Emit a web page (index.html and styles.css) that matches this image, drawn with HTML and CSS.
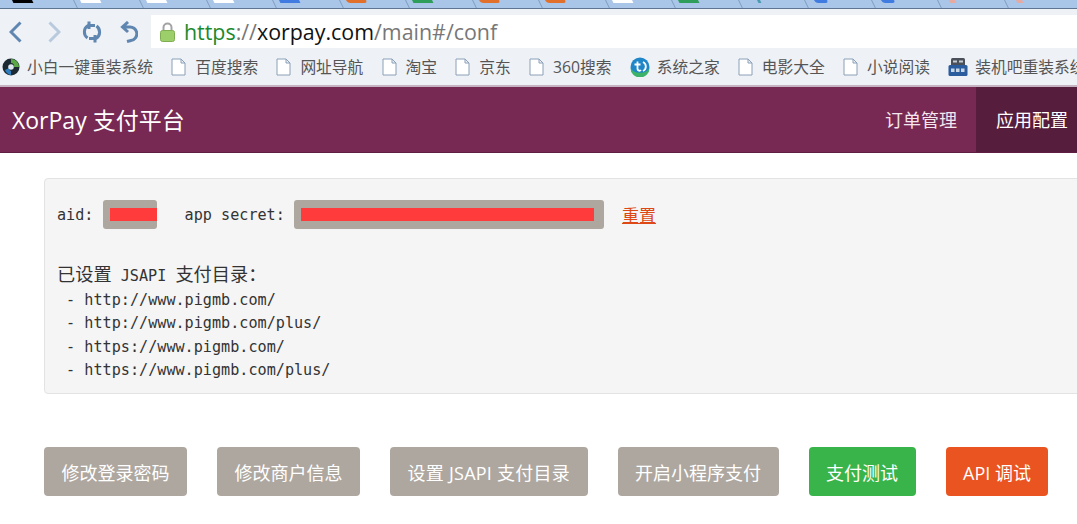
FILE: index.html
```html
<!DOCTYPE html>
<html lang="zh-CN">
  <head>
    <meta charset="UTF-8" />
    <title>XorPay 支付平台</title>
    <link rel="stylesheet" href="styles.css">
  </head>
  <body>
    <!-- browser chrome -->
    <div class="tabstrip">
      <div class="tab"><span class="fav fav-black"></span></div>
      <div class="tab"><span class="fav fav-white"></span></div>
      <div class="tab"><span class="fav fav-white"></span></div>
      <div class="tab"><span class="fav fav-white"></span></div>
      <div class="tab"><span class="fav fav-blue"></span></div>
      <div class="tab"><span class="fav fav-orange"></span></div>
      <div class="tab"><span class="fav fav-green"></span></div>
      <div class="tab"><span class="fav fav-orange"></span></div>
      <div class="tab"><span class="fav fav-orange"></span></div>
      <div class="tab"><span class="fav fav-white"></span></div>
      <div class="tab"><span class="fav fav-green"></span></div>
      <div class="tab"><span class="fav fav-tiny"></span></div>
      <div class="tab"><span class="fav fav-small"></span></div>
      <div class="tab"><span class="fav fav-small"></span></div>
      <div class="tab"><span class="fav fav-pink"></span></div>
      <div class="tab"><span class="fav fav-pink"></span></div>
    </div>
    <div class="toolbar">
      <svg class="back" width="13" height="22" viewBox="0 0 13 22"><path d="M11.500 1.500 L2 11 L11.500 20.500" fill="none" stroke="#5f86b0" stroke-width="3"/></svg>
      <svg class="next" width="13" height="22" viewBox="0 0 13 22"><path d="M1.500 1.500 L11 11 L1.500 20.500" fill="none" stroke="#b9cade" stroke-width="3"/></svg>
      <svg class="reload" width="20" height="22" viewBox="0 0 20 22"><path d="M5.500 17 A7.500 7.500 0 0 1 6 4.500 H13 M7 0.500 L7 8 M14.500 5 A7.500 7.500 0 0 1 14 17.500 H7 M13 21.500 L13 14" fill="none" stroke="#5f86b0" stroke-width="3"/></svg>
      <svg class="undo" width="18" height="22" viewBox="0 0 18 22"><path d="M3 6 H9 A6.500 6.500 0 0 1 11 19.500 L7 20.500 M8 1 L2.500 6 L8 11" fill="none" stroke="#5f86b0" stroke-width="3"/></svg>
      <div class="address">
        <svg width="15" height="20" viewBox="0 0 15 20"><path d="M3.500 9 V5.500 A4 4 0 0 1 11.500 5.500 V9" fill="none" stroke="#a3a3a3" stroke-width="2"/><rect x="0.500" y="8.500" width="14" height="11" rx="2" fill="#9ccf6a" stroke="#7fae52"/></svg>
        <span class="url"><span class="url-https">https</span><span class="url-grey">://</span><span class="url-host">xorpay.com</span><span class="url-grey">/main#/conf</span></span>
      </div>
    </div>
    <div class="bookmarks">
      <span class="bookmark with-logo">
        <svg width="18" height="18" viewBox="0 0 18 18"><circle cx="9" cy="9" r="8.500" fill="#1c2b33"/><path d="M9 1 A8 8 0 0 1 17 9 L12 9 A3 3 0 0 0 9 5 Z" fill="#5aa846"/><path d="M9 17 A8 8 0 0 1 3 12 L7 10 A3 3 0 0 0 9 13 Z" fill="#2f7fc0"/><circle cx="9" cy="9" r="2.800" fill="#dfe8ee"/></svg>
        小白一键重装系统
      </span>
      <span class="bookmark"><svg width="15" height="18" viewBox="0 0 15 18"><path d="M1 1 H10 L14 5 V17 H1 Z M10 1 V5 H14" fill="#fff" stroke="#8ba0b8"/></svg>百度搜索</span>
      <span class="bookmark"><svg width="15" height="18" viewBox="0 0 15 18"><path d="M1 1 H10 L14 5 V17 H1 Z M10 1 V5 H14" fill="#fff" stroke="#8ba0b8"/></svg>网址导航</span>
      <span class="bookmark"><svg width="15" height="18" viewBox="0 0 15 18"><path d="M1 1 H10 L14 5 V17 H1 Z M10 1 V5 H14" fill="#fff" stroke="#8ba0b8"/></svg>淘宝</span>
      <span class="bookmark"><svg width="15" height="18" viewBox="0 0 15 18"><path d="M1 1 H10 L14 5 V17 H1 Z M10 1 V5 H14" fill="#fff" stroke="#8ba0b8"/></svg>京东</span>
      <span class="bookmark"><svg width="15" height="18" viewBox="0 0 15 18"><path d="M1 1 H10 L14 5 V17 H1 Z M10 1 V5 H14" fill="#fff" stroke="#8ba0b8"/></svg>360搜索</span>
      <span class="bookmark with-logo">
        <svg width="20" height="20" viewBox="0 0 20 20"><circle cx="10" cy="10" r="9.500" fill="#1f86c8"/><path d="M0.500 11 A9.500 9.500 0 0 0 19.500 11 A10 7 0 0 1 0.500 11 Z" fill="#3db36a"/><path d="M7.500 4.500 V12 A2 2 0 0 0 11 13 M4.500 7.500 H10.500 M13 5 A5 5 0 0 1 13 14" fill="none" stroke="#fff" stroke-width="1.800"/></svg>
        系统之家
      </span>
      <span class="bookmark"><svg width="15" height="18" viewBox="0 0 15 18"><path d="M1 1 H10 L14 5 V17 H1 Z M10 1 V5 H14" fill="#fff" stroke="#8ba0b8"/></svg>电影大全</span>
      <span class="bookmark"><svg width="15" height="18" viewBox="0 0 15 18"><path d="M1 1 H10 L14 5 V17 H1 Z M10 1 V5 H14" fill="#fff" stroke="#8ba0b8"/></svg>小说阅读</span>
      <span class="bookmark with-logo">
        <svg width="20" height="20" viewBox="0 0 20 20"><rect x="3" y="1" width="14" height="8" rx="1.500" fill="#4a505a"/><rect x="5" y="3.500" width="4" height="2" fill="#c8ccd2"/><rect x="11" y="3.500" width="4" height="2" fill="#c8ccd2"/><rect x="0.500" y="8" width="19" height="11" rx="1.500" fill="#2a5c9e"/><rect x="3" y="11.500" width="3.500" height="3.500" fill="#c9d6e6"/><rect x="8" y="11.500" width="3.500" height="3.500" fill="#c9d6e6"/><rect x="13" y="11.500" width="3.500" height="3.500" fill="#c9d6e6"/></svg>
        装机吧重装系统
      </span>
    </div>

    <!-- site header -->
    <div class="navbar">
      <div class="brand">XorPay 支付平台</div>
      <div class="nav-items">
        <div class="nav-item">订单管理</div>
        <div class="nav-item active">应用配置</div>
      </div>
    </div>

    <div class="main">
      <div class="conf">
        <div class="conf-row">
          <span class="label">aid: </span>
          <span class="secret secret-aid"><span class="blot"></span></span>
          <span class="label label-secret">app secret: </span>
          <span class="secret secret-key"><span class="blot"></span></span>
          <a class="reset">重置</a>
        </div>
        <pre class="dirs"><span class="cjk">已设置</span> JSAPI <span class="cjk">支付目录：</span>
 - http://www.pigmb.com/
 - http://www.pigmb.com/plus/
 - https://www.pigmb.com/
 - https://www.pigmb.com/plus/</pre>
      </div>
      <div class="actions">
        <button class="btn">修改登录密码</button>
        <button class="btn">修改商户信息</button>
        <button class="btn btn-wide">设置 JSAPI 支付目录</button>
        <button class="btn">开启小程序支付</button>
        <button class="btn btn-green">支付测试</button>
        <button class="btn btn-orange">API 调试</button>
      </div>
    </div>
  </body>
</html>
```

FILE: styles.css
```css
* {
  margin: 0;
  padding: 0;
  box-sizing: border-box;
}

html,
body {
  overflow: hidden;
}

body {
  width: 1077px;
  height: 524px;
  background: #fff;
  font-family: "Open Sans", "Noto Sans CJK SC", sans-serif;
}

.tabstrip {
  height: 9px;
  padding-left: 6px;
  background: #a9c6e8;
  border-bottom: 1px solid #5d7590;
  display: flex;
  overflow: hidden;
}

.tab {
  flex: none;
  width: 66.5px;
  height: 8px;
  padding-left: 6px;
  border-left: 1px solid #7f9dbf;
  transform: skewX(26deg);
  transform-origin: 0 0;
}

.tab:first-child {
  border-left: none;
}

.fav {
  display: block;
  width: 20px;
  height: 3px;
}

.fav-black {
  background: #000;
}

.fav-white {
  background: #fff;
}

.fav-blue {
  background: #3f7be0;
}

.fav-orange {
  background: #e2702a;
  border-radius: 0 0 10px 10px;
}

.fav-green {
  background: #2f9e5a;
}

.fav-tiny {
  width: 3px;
  margin-left: 12px;
  background: #4a9ab0;
}

.fav-small {
  width: 13px;
  margin-left: 3px;
  background: #3f7be0;
  border-radius: 0 0 6px 6px;
}

.fav-pink {
  width: 6px;
  margin-left: 5px;
  background: #e8a9a0;
}

.toolbar {
  height: 39px;
  background: #eef1f5;
  display: flex;
  align-items: flex-start;
  padding: 6px 0 0 9px;
}

.back,
.next,
.reload,
.undo {
  flex: none;
  margin-top: 6px;
}

.next {
  margin-left: 26px;
}

.reload {
  margin-left: 21px;
}

.undo {
  margin-left: 18px;
}

.address {
  flex: 1;
  height: 33px;
  margin-left: 13px;
  background: #fff;
  display: flex;
  align-items: center;
  padding-left: 9px;
  gap: 9px;
}

.url {
  font-size: 21.4px;
  color: #111;
}

.url-https {
  color: #1a8a2e;
}

.url-grey {
  color: #777;
}

.bookmarks {
  height: 39px;
  background: #eef1f5;
  border-bottom: 2px solid #c6b3c2;
  display: flex;
  align-items: center;
  padding-left: 2px;
  gap: 18.2px;
  white-space: nowrap;
  overflow: hidden;
  font-size: 15.75px;
  color: #555;
}

.bookmark {
  display: flex;
  align-items: center;
  gap: 9px;
}

.with-logo {
  gap: 7px;
}

.navbar {
  height: 66px;
  background: #772953;
  border-bottom: 1px solid #5e1f42;
  display: flex;
  justify-content: space-between;
  color: #fff;
}

.brand {
  padding-left: 12px;
  font-size: 23px;
  line-height: 67px;
}

.nav-items {
  display: flex;
}

.nav-item {
  padding: 0 19px 0 20px;
  font-size: 18px;
  line-height: 67px;
  color: #f3e6ed;
}

.nav-item.active {
  background: #571d3c;
  padding-right: 9px;
  color: #fff;
}

.main {
  padding: 25px 0 0 44px;
}

.conf {
  width: 1060px;
  height: 216px;
  padding: 21px 12px 0;
  background: #f5f5f5;
  border: 1px solid #e3e3e3;
  border-radius: 4px;
  font-family: "DejaVu Sans Mono", "Noto Sans CJK SC", monospace;
  font-size: 15.150px;
  color: #333;
}

.conf-row {
  display: flex;
  align-items: center;
  height: 29px;
  white-space: pre;
}

.secret {
  display: block;
  height: 29px;
  background: #aea79f;
  border-radius: 3px;
  padding: 8px 0 0 7px;
}

.secret-aid {
  width: 54px;
}

.secret-key {
  width: 310px;
}

.blot {
  display: block;
  height: 13px;
  width: 47px;
  background: #ff3b3b;
}

.secret-key .blot {
  width: 293px;
}

.label-secret {
  margin-left: 28px;
}

.reset {
  margin-left: 18px;
  font-size: 17px;
  color: #dd4814;
  text-decoration: underline;
}

.dirs {
  margin-top: 36px;
  font: inherit;
  line-height: 23.6px;
}

.cjk {
  font-size: 18.200px;
  line-height: 1;
}

.actions {
  display: flex;
  margin-top: 53px;
  gap: 30px;
}

.btn {
  height: 49px;
  padding: 0 17.500px;
  background: #aea79f;
  border: none;
  border-radius: 4px;
  color: #fff;
  font-family: "Open Sans", "Noto Sans CJK SC", sans-serif;
  font-size: 18px;
}

.btn-wide {
  letter-spacing: 0.250px;
}

.btn-green {
  background: #38b44a;
}

.btn-orange {
  background: #e95420;
}
```
